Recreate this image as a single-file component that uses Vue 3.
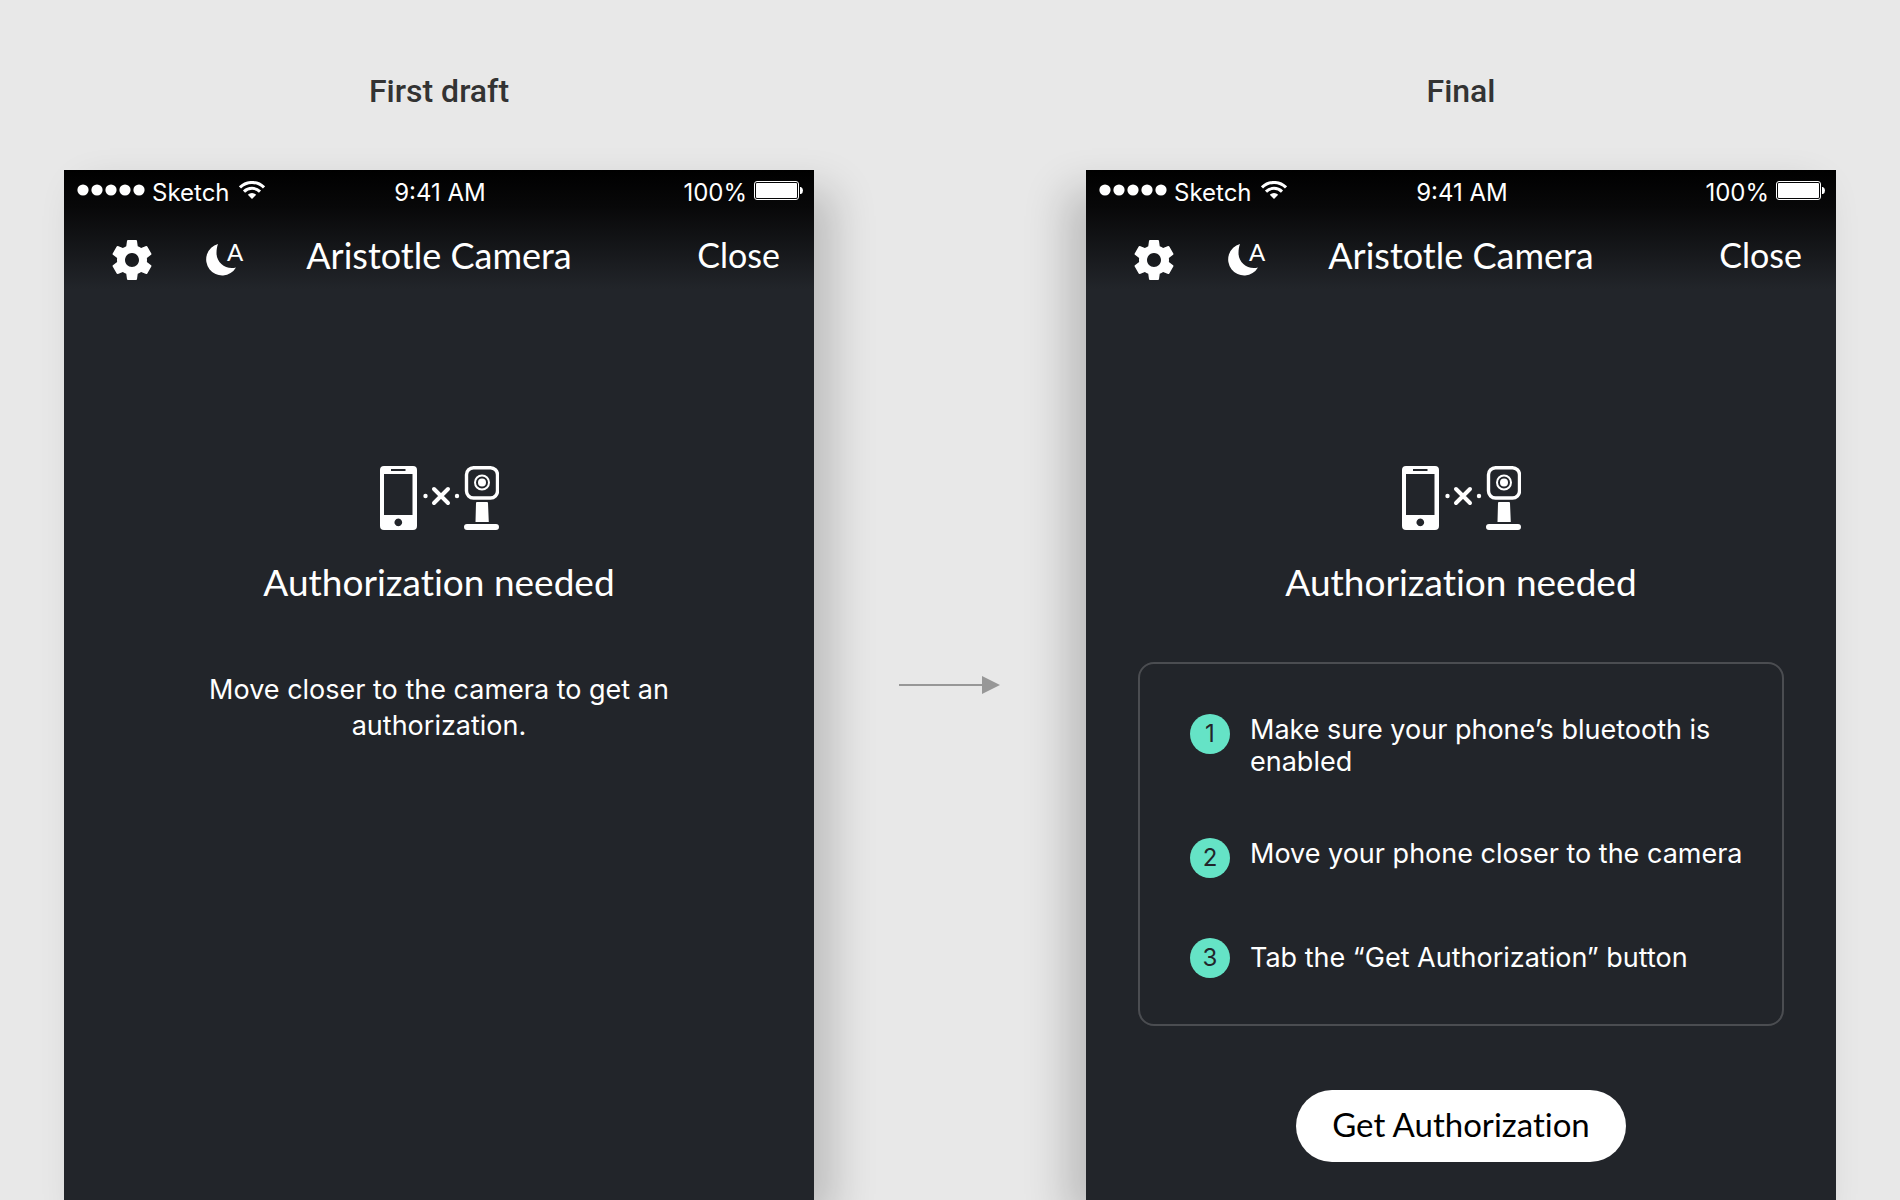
<script setup>
const screens = [
  { id: 'draft', label: 'First draft' },
  { id: 'final', label: 'Final' },
]
const steps = [
  'Make sure your phone’s bluetooth is enabled',
  'Move your phone closer to the camera',
  'Tab the “Get Authorization” button',
]
</script>

<template>
  <main class="board">
    <template v-for="(screen, i) in screens" :key="screen.id">
      <div v-if="i > 0" class="between">
        <svg class="arrow" viewBox="0 0 102 20" aria-hidden="true">
          <path d="M0 10H84" stroke="#979797" stroke-width="2" />
          <path d="M83 1L101 10L83 19Z" fill="#979797" />
        </svg>
      </div>
      <section class="column">
        <h2 class="label">{{ screen.label }}</h2>
        <div class="phone" :class="screen.id">
          <header class="top">
            <div class="status">
              <div class="carrier">
                <svg class="signal" viewBox="0 0 68 12" aria-hidden="true">
                  <circle v-for="n in 5" :key="n" :cx="n * 14 - 8" cy="6" r="5.6" fill="#fff" />
                </svg>
                <span>Sketch</span>
                <svg class="wifi" viewBox="0 0 26 18" aria-hidden="true">
                  <g fill="none" stroke="#fff" stroke-width="3">
                    <path d="M1 6.400a17 17 0 0 1 24 0" />
                    <path d="M5 10.600a11.300 11.300 0 0 1 16 0" />
                  </g>
                  <path d="M13 18l-4.200-4.200a6 6 0 0 1 8.400 0z" fill="#fff" />
                </svg>
              </div>
              <span>9:41 AM</span>
              <div class="power">
                <span>100%</span>
                <svg class="battery" viewBox="0 0 49 19" aria-hidden="true">
                  <rect x=".5" y=".5" width="44" height="18" rx="2.5" fill="none" stroke="#fff" />
                  <rect x="2" y="2" width="41" height="15" rx="1" fill="#fff" />
                  <path d="M46 6h1q2 1 2 3.500t-2 3.500h-1z" fill="#fff" />
                </svg>
              </div>
            </div>
            <nav class="bar">
              <div class="tools">
                <button class="tool gear" type="button" aria-label="Settings">
                  <svg viewBox="2 2 20 20" aria-hidden="true">
                    <path fill="#fff" d="M19.430 12.980c.04-.32.07-.64.07-.98s-.03-.66-.07-.98l2.110-1.650c.19-.15.24-.42.12-.64l-2-3.460c-.12-.22-.39-.3-.61-.22l-2.490 1c-.52-.4-1.080-.73-1.690-.98l-.38-2.650C14.460 2.180 14.250 2 14 2h-4c-.25 0-.46.18-.49.42l-.38 2.650c-.61.25-1.170.59-1.690.98l-2.490-1c-.23-.09-.49 0-.61.22l-2 3.460c-.13.22-.07.49.12.64l2.110 1.650c-.04.32-.07.65-.07.98s.03.66.07.98l-2.110 1.650c-.19.15-.24.42-.12.64l2 3.460c.12.22.39.3.61.22l2.490-1c.52.4 1.080.73 1.690.98l.38 2.650c.03.24.24.42.49.42h4c.25 0 .46-.18.49-.42l.38-2.650c.61-.25 1.170-.59 1.690-.98l2.490 1c.23.09.49 0 .61-.22l2-3.460c.12-.22.07-.49-.12-.64l-2.110-1.650zM12 15.500c-1.930 0-3.500-1.570-3.500-3.500s1.570-3.500 3.500-3.500 3.500 1.570 3.500 3.500-1.570 3.500-3.500 3.500z" />
                  </svg>
                </button>
                <button class="tool night" type="button" aria-label="Automatic night mode">
                  <svg class="moon" viewBox="0 0 30 32" aria-hidden="true">
                    <path fill="#fff" d="M12 0A16 16 0 1 0 30 23.500C20 26 10.500 19 10.500 9C10.500 5.500 11 2.500 12 0Z" />
                  </svg>
                  <span>A</span>
                </button>
              </div>
              <h1 class="title">Aristotle Camera</h1>
              <button class="close" type="button">Close</button>
            </nav>
          </header>

          <div class="body">
            <svg class="pair" viewBox="0 0 120 64" aria-hidden="true">
              <path fill="#fff" fill-rule="evenodd" d="M5 0H34a4 4 0 0 1 4 4V60a4 4 0 0 1-4 4H5a4 4 0 0 1-4-4V4a4 4 0 0 1 4-4ZM5 8V49H33.500V8ZM12 3V5H26.500V3ZM19.300 52.600a3.800 3.800 0 1 0 .01 0Z" />
              <circle cx="46.500" cy="30" r="2.200" fill="#fff" />
              <circle cx="78" cy="30" r="2.200" fill="#fff" />
              <path d="M55 23L69 37M69 23L55 37" stroke="#fff" stroke-width="4" stroke-linecap="round" />
              <rect x="87.500" y="1.700" width="31" height="30.300" rx="7" fill="none" stroke="#fff" stroke-width="3.400" />
              <circle cx="103" cy="16.500" r="7" fill="none" stroke="#fff" stroke-width="2" />
              <circle cx="103" cy="16.500" r="4" fill="#fff" />
              <path fill="#fff" d="M98 36h10a1 1 0 0 1 1 1l.8 19H96.500l.5-19a1 1 0 0 1 1-1ZM88 58h29q3 0 3 3v0q0 3-3 3H88q-3 0-3-3v0q0-3 3-3Z" />
            </svg>
            <h3 class="heading">Authorization needed</h3>

            <p v-if="screen.id === 'draft'" class="hint">
              Move closer to the camera to get an authorization.
            </p>
            <template v-else>
              <ol class="steps">
                <li v-for="(step, n) in steps" :key="step" class="step">
                  <span class="num">{{ n + 1 }}</span>
                  <span>{{ step }}</span>
                </li>
              </ol>
              <button class="cta" type="button">Get Authorization</button>
            </template>
          </div>
        </div>
      </section>
    </template>
  </main>
</template>

<style>
body {
  margin: 0;
  background: #e8e8e8;
}
</style>

<style scoped>
.board {
  box-sizing: border-box;
  min-height: 100vh;
  padding: 0 64px;
  display: grid;
  grid-template-columns: 1fr 272px 1fr;
  font-family: Inter, "Liberation Sans", sans-serif;
  font-variant-ligatures: no-common-ligatures;
  color: #fff;
  overflow: hidden;
}
.board * {
  box-sizing: border-box;
}
h1, h2, h3, p, ol {
  margin: 0;
  padding: 0;
  font-weight: 400;
}
button {
  border: 0;
  padding: 0;
  background: none;
  color: inherit;
  font-family: Lato, sans-serif;
  font-variant-ligatures: inherit;
}
svg {
  display: block;
}
.between {
  display: flex;
  justify-content: center;
  align-items: flex-start;
  padding-top: 675px;
}
.arrow {
  width: 102px;
  height: 20px;
}
.column {
  display: flex;
  flex-direction: column;
}
.label {
  padding: 71px 0 59px;
  font-family: Roboto, sans-serif;
  font-size: 32px;
  font-weight: 500;
  line-height: 40px;
  color: #333;
  text-align: center;
}
.phone {
  flex: 1;
  background: #22252a;
}
.draft {
  box-shadow: 20px 20px 40px rgba(0, 0, 0, 0.19);
}
.final {
  box-shadow: -20px 20px 40px rgba(0, 0, 0, 0.19);
}
.top {
  background: linear-gradient(#000, #080809 30%, #22252a 96%);
}
.status {
  display: grid;
  grid-template-columns: 1fr auto 1fr;
  height: 46px;
  padding: 0 11px 0 13px;
  font-size: 24px;
  line-height: 46px;
}
.carrier, .power {
  display: flex;
  gap: 7px;
}
.power {
  justify-content: flex-end;
}
.signal {
  width: 68px;
  height: 12px;
  margin-top: 14px;
}
.wifi {
  width: 26px;
  height: 18px;
  margin: 11px 0 0 2px;
}
.battery {
  width: 49px;
  height: 19px;
  margin-top: 11px;
}
.bar {
  display: grid;
  grid-template-columns: 1fr auto 1fr;
  align-items: center;
  height: 78px;
  padding: 0 34px;
}
.tools {
  display: flex;
  gap: 54px;
  margin: 10px 0 0 14px;
}
.gear svg {
  width: 40px;
  height: 40px;
}
.night {
  display: flex;
  align-items: flex-start;
  font-size: 24px;
  line-height: 24px;
}
.moon {
  width: 30px;
  height: 32px;
  margin: 4px -9px 0 0;
}
.title {
  font-family: Lato, sans-serif;
  font-size: 36px;
  line-height: 78px;
}
.close {
  justify-self: end;
  font-size: 34px;
  line-height: 78px;
}
.body {
  display: flex;
  flex-direction: column;
  align-items: center;
  padding: 172px 52px 20px;
}
.pair {
  width: 120px;
  height: 64px;
}
.heading {
  margin-top: 32px;
  font-family: Lato, sans-serif;
  font-size: 37px;
  line-height: 40px;
}
.hint {
  max-width: 500px;
  margin-top: 70px;
  font-size: 27px;
  line-height: 36px;
  text-align: center;
}
.steps {
  width: 100%;
  margin-top: 60px;
  padding: 50px 20px 46px 50px;
  display: flex;
  flex-direction: column;
  gap: 60px;
  border: 2px solid #4b4d51;
  border-radius: 16px;
  list-style: none;
  font-size: 27px;
  line-height: 32px;
}
.step {
  display: flex;
  gap: 20px;
}
.step:last-child {
  align-items: center;
}
.num {
  flex: none;
  width: 40px;
  height: 40px;
  border-radius: 50%;
  background: #65e3c6;
  color: #22252a;
  font-size: 24px;
  line-height: 40px;
  text-align: center;
}
.cta {
  height: 72px;
  margin-top: 64px;
  padding: 0 36px 4px;
  border-radius: 36px;
  background: #fff;
  color: #000;
  font-size: 33px;
}
</style>
